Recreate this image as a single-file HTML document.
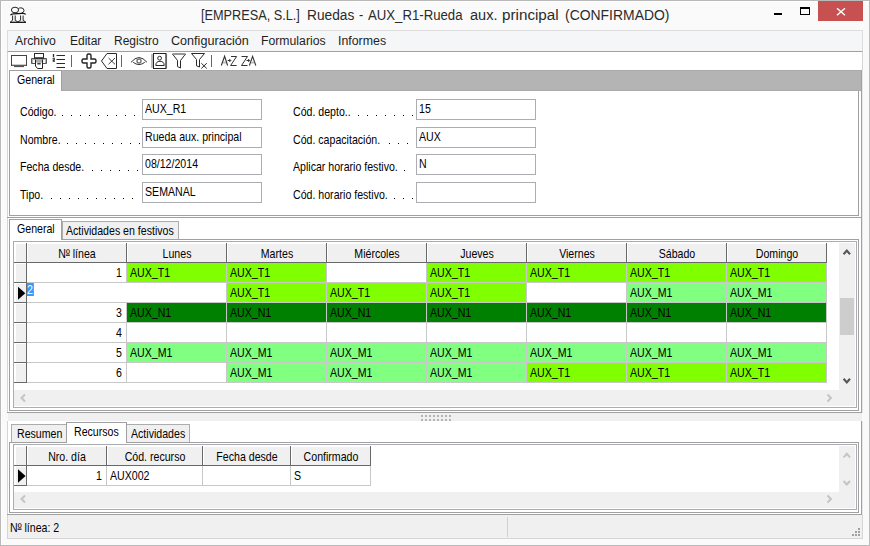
<!DOCTYPE html>
<html><head><meta charset="utf-8">
<style>
*{margin:0;padding:0;box-sizing:border-box}
html,body{width:870px;height:546px;overflow:hidden;background:#fafafa}
body{position:relative;font-family:"Liberation Sans",sans-serif;color:#000}
.a{position:absolute}
.t{position:absolute;white-space:nowrap;font-size:10.6px;line-height:13px;transform:scaleY(1.13);transform-origin:0 10px}
.m{transform:none}
.s{display:inline-block;transform:scaleY(1.13);transform-origin:50% 13px}
.m{font-size:12px;line-height:15px;color:#1e1e1e;transform:none}
.hl{position:absolute;height:1px}
.vl{position:absolute;width:1px}
.c{position:absolute;height:19px;font-size:10.6px;line-height:19px;padding-left:3px;padding-top:1px;white-space:nowrap;overflow:hidden}
.hd{position:absolute;text-align:center;font-size:10.6px;line-height:19px;padding-top:1px;white-space:nowrap;background:#f0f0f0;border-top:1px solid #fff;border-left:1px solid #fff}
svg{position:absolute;overflow:visible}
</style></head><body>

<div class="a" style="left:0px;top:0px;width:870px;height:546px;border:1px solid #b9b9b9"></div>
<div class="hl" style="left:1px;top:1px;width:868px;background:#fff"></div>
<div class="vl" style="left:1px;top:1px;height:544px;background:#fff"></div>
<div class="a" style="left:201.0px;top:6px;font-size:14px;line-height:18px;color:#2b2b2b;white-space:nowrap;transform:scaleX(0.908);transform-origin:0.0px 0">[EMPRESA, S.L.]</div>
<div class="a" style="left:307.0px;top:6px;font-size:14px;line-height:18px;color:#2b2b2b;white-space:nowrap;transform:scaleX(0.979);transform-origin:0.0px 0">Ruedas</div>
<div class="a" style="left:359.0px;top:6px;font-size:14px;line-height:18px;color:#2b2b2b;white-space:nowrap;transform:scaleX(0.900);transform-origin:0.0px 0">-</div>
<div class="a" style="left:368.0px;top:6px;font-size:14px;line-height:18px;color:#2b2b2b;white-space:nowrap;transform:scaleX(0.941);transform-origin:0.0px 0">AUX_R1-Rueda</div>
<div class="a" style="left:470.0px;top:6px;font-size:14px;line-height:18px;color:#2b2b2b;white-space:nowrap;transform:scaleX(1.038);transform-origin:0.0px 0">aux.</div>
<div class="a" style="left:502.0px;top:6px;font-size:14px;line-height:18px;color:#2b2b2b;white-space:nowrap;transform:scaleX(1.087);transform-origin:0.0px 0">principal</div>
<div class="a" style="left:565.0px;top:6px;font-size:14px;line-height:18px;color:#2b2b2b;white-space:nowrap;transform:scaleX(0.995);transform-origin:0.0px 0">(CONFIRMADO)</div>
<div class="a" style="left:818px;top:1px;width:45px;height:20px;background:#c75050"></div>
<svg style="left:0;top:0" width="870" height="30"><path d="M837 8.3 L845 15.2 M845 8.3 L837 15.2" stroke="#fff" stroke-width="1.45"/><rect x="774" y="13" width="8" height="2" fill="#000"/><rect x="800.5" y="7.5" width="9" height="7" fill="none" stroke="#000" stroke-width="1"/><rect x="800" y="7" width="10" height="2" fill="#000"/></svg>
<svg style="left:0;top:0" width="40" height="30"><g fill="none" stroke="#111" stroke-width="0.9"><ellipse cx="15" cy="10" rx="3.6" ry="2.8"/><path d="M18.4 8.6 Q19.5 7.8 21 7.8 Q24 8 24 10.6 Q24 12.6 21.5 13"/><path d="M10.5 15.3 Q11 14 13.5 13.8 L22.5 13.4 Q25.3 13.3 25.6 14.5" stroke-width="1.2"/><path d="M12.6 15.5 V20.3 M15.2 15.5 V20.3 M20.6 15.5 V20.3 M23.1 15.5 V20.3"/><path d="M10.4 22 L12.6 20.2 M15.2 20.2 L17.8 22 L20.6 20.2 M23.1 20.2 L25.5 22"/><path d="M10 22.3 H26" stroke-width="1.3"/></g></svg>
<div class="a" style="left:7px;top:30px;width:856px;height:22px;background:#f5f6f7;border:1px solid #dcdcdc;border-bottom:1px solid #a0a0a0"></div>
<div class="t m" style="left:15px;top:34px;transform:scaleX(1.020);transform-origin:0 0">Archivo</div>
<div class="t m" style="left:70px;top:34px;transform:scaleX(1.000);transform-origin:0 0">Editar</div>
<div class="t m" style="left:114px;top:34px;transform:scaleX(1.000);transform-origin:0 0">Registro</div>
<div class="t m" style="left:171px;top:34px;transform:scaleX(1.050);transform-origin:0 0">Configuración</div>
<div class="t m" style="left:261px;top:34px;transform:scaleX(1.020);transform-origin:0 0">Formularios</div>
<div class="t m" style="left:338px;top:34px;transform:scaleX(1.030);transform-origin:0 0">Informes</div>
<div class="a" style="left:7px;top:52px;width:856px;height:18px;background:#fff;border-left:1px solid #d5d5d5;border-right:1px solid #d5d5d5"></div>
<svg style="left:0;top:0" width="870" height="75"><g fill="none" stroke="#2a2a2a" stroke-width="1">
<rect x="11.5" y="55.5" width="15" height="10" stroke="#444"/><rect x="12" y="64" width="14" height="1.2" fill="#ccc" stroke="none"/><path d="M14 66.5 H24" stroke="#555" stroke-width="1.2"/>
<rect x="34.5" y="53.5" width="9" height="4.5"/><path d="M31.5 58.5 H46.5 V63.5 H31.5 Z" fill="#b4b4b4" stroke="#555"/><rect x="33" y="60" width="12" height="3" fill="#f4f4f4" stroke="none"/><path d="M34 58.2 H44" stroke="#333" stroke-width="1.6"/><path d="M35.5 59.5 V66 L37.5 68.5 H42.5 V59.5" fill="#fff" stroke="#222"/><rect x="36" y="59" width="6" height="3.5" fill="#aaa" stroke="none"/><rect x="37.3" y="62.8" width="3.4" height="1.7" fill="#444" stroke="none"/>
<path d="M53.5 54 V57" stroke-width="1.3"/><path d="M52.5 58.3 H54.3 V60 H53.2 V61.3 H55" stroke-width="1.1"/><path d="M56.5 55.5 H65 M56.5 59.5 H65 M56.5 63.5 H65 M56.5 67.5 H65"/>
<path d="M71.5 55 V67" stroke="#666"/>
<path d="M87 59 V55.5 A1.5 1.5 0 0 1 88.5 54 H89.5 A1.5 1.5 0 0 1 91 55.5 V59 H94.5 A1.5 1.5 0 0 1 96 60.5 V61.5 A1.5 1.5 0 0 1 94.5 63 H91 V66.5 A1.5 1.5 0 0 1 89.5 68 H88.5 A1.5 1.5 0 0 1 87 66.5 V63 H83.5 A1.5 1.5 0 0 1 82 61.5 V60.5 A1.5 1.5 0 0 1 83.5 59 Z" stroke-width="1.4" stroke="#222"/>
<path d="M116.5 53.5 H107 L101.5 61 L107 68.5 H116.5 Z" stroke-linejoin="miter"/><path d="M108.5 58 L115 64.3 M115 58 L108.5 64.3" stroke-width="0.9"/>
<path d="M121.5 55 V67" stroke="#666"/>
<path d="M131 62.3 Q139 52.8 147 62.3 M133.2 62.3 Q139 66.8 144.8 62.3" stroke="#333"/><circle cx="139" cy="61" r="2" stroke="#777" stroke-width="1.4"/>
<path d="M152 54 V68 M166.3 54 V68" stroke="#aaa" stroke-width="1.6"/><rect x="153.5" y="53.5" width="12.5" height="15" stroke="#222"/>
<circle cx="159.6" cy="58.2" r="1.9"/><path d="M155.8 65.5 Q155.8 61.3 160 61.3 Q164.2 61.3 164.2 65.5 Z"/>
<path d="M172.5 54 H185.5 L180.5 60.5 V68 L177.5 66.5 V60.5 Z"/><path d="M173 54.3 H185" stroke="#999" stroke-width="1.2"/>
<path d="M191.5 53.5 H204.5 L199.5 59.5 V67 L196.5 65.8 V59.5 Z"/><path d="M201.3 63.2 L206.8 68.5 M206.8 63.2 L201.3 68.5"/>
<path d="M211.5 55 V67" stroke="#666"/>
</g>
<g fill="none" stroke="#333" stroke-width="1">
<path d="M221.3 65.5 L224.6 56.3 L227.6 65.5" stroke-width="1.1"/><path d="M223 62.5 H226" stroke="#bbb" stroke-width="2"/><path d="M227.7 60.5 H230.5 M229.3 59 L230.8 60.5 L229.3 62"/>
<path d="M231 56.5 H236.6 L230.6 65.5 H236.6"/>
<path d="M241.5 56.5 H247.5 L241.5 65.5 H247.5"/><path d="M246.5 60.5 H249.5 M248.2 59 L249.7 60.5 L248.2 62"/>
<path d="M249.4 65.5 L252.6 56.3 L255.8 65.5" stroke-width="1.1"/><path d="M251 62.5 H254" stroke="#bbb" stroke-width="2"/>
</g></svg>
<div class="a" style="left:7px;top:70px;width:856px;height:148px;background:#fff;border-left:1px solid #d5d5d5;border-right:1px solid #e6e6e6"></div>
<div class="vl" style="left:861px;top:70px;height:148px;background:#a0a0a0"></div>
<div class="hl" style="left:7px;top:217px;width:855px;background:#a0a0a0"></div>
<div class="a" style="left:62px;top:70px;width:799px;height:21px;background:#b4b4b4"></div>
<div class="hl" style="left:62px;top:70px;width:799px;background:#aaaaaa"></div>
<div class="hl" style="left:62px;top:90px;width:799px;background:#aaaaaa"></div>
<div class="vl" style="left:9px;top:70px;height:146px;background:#a0a0a0"></div>
<div class="hl" style="left:9px;top:70px;width:53px;background:#a0a0a0"></div>
<div class="vl" style="left:61px;top:70px;height:21px;background:#a0a0a0"></div>
<div class="vl" style="left:858px;top:91px;height:125px;background:#a0a0a0"></div>
<div class="hl" style="left:9px;top:215px;width:850px;background:#a0a0a0"></div>
<div class="t" style="left:17px;top:74px;">General</div>
<div class="t" style="left:20px;top:106px;">Código.</div>
<div class="a" style="left:142px;top:99px;width:120px;height:21px;border:1px solid #abadb3;background:#fff"></div>
<div class="t" style="left:145px;top:103px;">AUX<span style="position:relative;top:-1px">_</span>R1</div>
<div class="t" style="left:293px;top:106px;">Cód. depto..</div>
<div class="a" style="left:416px;top:99px;width:120px;height:21px;border:1px solid #abadb3;background:#fff"></div>
<div class="t" style="left:419px;top:103px;">15</div>
<div class="t" style="left:20px;top:134px;">Nombre.</div>
<div class="a" style="left:142px;top:127px;width:120px;height:21px;border:1px solid #abadb3;background:#fff"></div>
<div class="t" style="left:145px;top:131px;">Rueda aux. principal</div>
<div class="t" style="left:293px;top:134px;">Cód. capacitación.</div>
<div class="a" style="left:416px;top:127px;width:120px;height:21px;border:1px solid #abadb3;background:#fff"></div>
<div class="t" style="left:419px;top:131px;">AUX</div>
<div class="t" style="left:20px;top:161px;">Fecha desde.</div>
<div class="a" style="left:142px;top:154px;width:120px;height:21px;border:1px solid #abadb3;background:#fff"></div>
<div class="t" style="left:145px;top:158px;">08/12/2014</div>
<div class="t" style="left:293px;top:161px;">Aplicar horario festivo.</div>
<div class="a" style="left:416px;top:154px;width:120px;height:21px;border:1px solid #abadb3;background:#fff"></div>
<div class="t" style="left:419px;top:158px;">N</div>
<div class="t" style="left:20px;top:189px;">Tipo.</div>
<div class="a" style="left:142px;top:182px;width:120px;height:21px;border:1px solid #abadb3;background:#fff"></div>
<div class="t" style="left:145px;top:186px;">SEMANAL</div>
<div class="t" style="left:293px;top:189px;">Cód. horario festivo.</div>
<div class="a" style="left:416px;top:182px;width:120px;height:21px;border:1px solid #abadb3;background:#fff"></div>
<div class="t" style="left:419px;top:186px;"></div>
<svg style="left:0;top:0" width="870" height="220"><g fill="#000">
<rect x="62" y="115" width="1" height="1"/><rect x="71" y="115" width="1" height="1"/><rect x="80" y="115" width="1" height="1"/><rect x="89" y="115" width="1" height="1"/><rect x="98" y="115" width="1" height="1"/><rect x="107" y="115" width="1" height="1"/><rect x="116" y="115" width="1" height="1"/><rect x="125" y="115" width="1" height="1"/><rect x="134" y="115" width="1" height="1"/><rect x="67" y="143" width="1" height="1"/><rect x="76" y="143" width="1" height="1"/><rect x="85" y="143" width="1" height="1"/><rect x="94" y="143" width="1" height="1"/><rect x="103" y="143" width="1" height="1"/><rect x="112" y="143" width="1" height="1"/><rect x="121" y="143" width="1" height="1"/><rect x="130" y="143" width="1" height="1"/><rect x="139" y="143" width="1" height="1"/><rect x="92" y="170" width="1" height="1"/><rect x="101" y="170" width="1" height="1"/><rect x="110" y="170" width="1" height="1"/><rect x="119" y="170" width="1" height="1"/><rect x="128" y="170" width="1" height="1"/><rect x="137" y="170" width="1" height="1"/><rect x="51" y="198" width="1" height="1"/><rect x="60" y="198" width="1" height="1"/><rect x="69" y="198" width="1" height="1"/><rect x="78" y="198" width="1" height="1"/><rect x="87" y="198" width="1" height="1"/><rect x="96" y="198" width="1" height="1"/><rect x="105" y="198" width="1" height="1"/><rect x="114" y="198" width="1" height="1"/><rect x="123" y="198" width="1" height="1"/><rect x="132" y="198" width="1" height="1"/>
<rect x="358" y="115" width="1" height="1"/><rect x="367" y="115" width="1" height="1"/><rect x="376" y="115" width="1" height="1"/><rect x="385" y="115" width="1" height="1"/><rect x="394" y="115" width="1" height="1"/><rect x="403" y="115" width="1" height="1"/><rect x="412" y="115" width="1" height="1"/><rect x="389" y="143" width="1" height="1"/><rect x="398" y="143" width="1" height="1"/><rect x="407" y="143" width="1" height="1"/><rect x="404" y="170" width="1" height="1"/><rect x="394" y="198" width="1" height="1"/><rect x="403" y="198" width="1" height="1"/><rect x="412" y="198" width="1" height="1"/>
</g></svg>
<div class="a" style="left:7px;top:218px;width:856px;height:195px;background:#fff;border-left:1px solid #d5d5d5;border-right:1px solid #e6e6e6"></div>
<div class="vl" style="left:861px;top:218px;height:195px;background:#a0a0a0"></div>
<div class="hl" style="left:7px;top:412px;width:855px;background:#a0a0a0"></div>
<div class="a" style="left:62px;top:221px;width:117px;height:19px;background:#f0f0f0;border:1px solid #acacac;border-bottom:none"></div>
<div class="a" style="left:9px;top:219px;width:53px;height:21px;background:#fff;border:1px solid #a0a0a0;border-bottom:none"></div>
<div class="t" style="left:17px;top:223px;">General</div>
<div class="t" style="left:66px;top:225px;">Actividades en festivos</div>
<div class="hl" style="left:62px;top:239px;width:797px;background:#a0a0a0"></div>
<div class="vl" style="left:9px;top:239px;height:172px;background:#a0a0a0"></div>
<div class="vl" style="left:858px;top:239px;height:172px;background:#a0a0a0"></div>
<div class="hl" style="left:9px;top:410px;width:850px;background:#a0a0a0"></div>
<div class="a" style="left:13px;top:241px;width:844px;height:167px;border:1px solid #abadb3;background:#fff"></div>
<div class="hd" style="left:14px;top:243px;width:12px;height:20px;border-left:2px solid #fff"></div>
<div class="vl" style="left:26px;top:243px;height:20px;background:#696969"></div>
<div class="hd" style="left:27px;top:243px;width:99px;height:20px"><span class="s">N<span style="text-decoration:underline;text-decoration-thickness:1px;text-underline-offset:-3px;text-decoration-skip-ink:none">º</span> línea</span></div>
<div class="vl" style="left:126px;top:243px;height:20px;background:#696969"></div>
<div class="hd" style="left:127px;top:243px;width:99px;height:20px"><span class="s">Lunes</span></div>
<div class="vl" style="left:226px;top:243px;height:20px;background:#696969"></div>
<div class="hd" style="left:227px;top:243px;width:99px;height:20px"><span class="s">Martes</span></div>
<div class="vl" style="left:326px;top:243px;height:20px;background:#696969"></div>
<div class="hd" style="left:327px;top:243px;width:99px;height:20px"><span class="s">Miércoles</span></div>
<div class="vl" style="left:426px;top:243px;height:20px;background:#696969"></div>
<div class="hd" style="left:427px;top:243px;width:99px;height:20px"><span class="s">Jueves</span></div>
<div class="vl" style="left:526px;top:243px;height:20px;background:#696969"></div>
<div class="hd" style="left:527px;top:243px;width:99px;height:20px"><span class="s">Viernes</span></div>
<div class="vl" style="left:626px;top:243px;height:20px;background:#696969"></div>
<div class="hd" style="left:627px;top:243px;width:99px;height:20px"><span class="s">Sábado</span></div>
<div class="vl" style="left:726px;top:243px;height:20px;background:#696969"></div>
<div class="hd" style="left:727px;top:243px;width:99px;height:20px"><span class="s">Domingo</span></div>
<div class="vl" style="left:826px;top:243px;height:20px;background:#696969"></div>
<div class="hl" style="left:14px;top:262px;width:813px;background:#696969"></div>
<div class="a" style="left:14px;top:263px;width:12px;height:19px;background:#f0f0f0;border-top:1px solid #fff;border-left:2px solid #fff"></div>
<div class="hl" style="left:14px;top:282px;width:13px;background:#696969"></div>
<div class="vl" style="left:26px;top:263px;height:20px;background:#696969"></div>
<div class="c" style="left:27px;top:263px;width:99px;background:#ffffff;text-align:right;padding-right:4px;padding-left:0"><span class="s">1</span></div>
<div class="vl" style="left:126px;top:263px;height:20px;background:#c8c8c8"></div>
<div class="c" style="left:127px;top:263px;width:99px;background:#80ff00;"><span class="s">AUX<span style="position:relative;top:-1px">_</span>T1</span></div>
<div class="vl" style="left:226px;top:263px;height:20px;background:#c8c8c8"></div>
<div class="c" style="left:227px;top:263px;width:99px;background:#80ff00;"><span class="s">AUX<span style="position:relative;top:-1px">_</span>T1</span></div>
<div class="vl" style="left:326px;top:263px;height:20px;background:#c8c8c8"></div>
<div class="c" style="left:327px;top:263px;width:99px;background:#ffffff;"><span class="s"></span></div>
<div class="vl" style="left:426px;top:263px;height:20px;background:#c8c8c8"></div>
<div class="c" style="left:427px;top:263px;width:99px;background:#80ff00;"><span class="s">AUX<span style="position:relative;top:-1px">_</span>T1</span></div>
<div class="vl" style="left:526px;top:263px;height:20px;background:#c8c8c8"></div>
<div class="c" style="left:527px;top:263px;width:99px;background:#80ff00;"><span class="s">AUX<span style="position:relative;top:-1px">_</span>T1</span></div>
<div class="vl" style="left:626px;top:263px;height:20px;background:#c8c8c8"></div>
<div class="c" style="left:627px;top:263px;width:99px;background:#80ff00;"><span class="s">AUX<span style="position:relative;top:-1px">_</span>T1</span></div>
<div class="vl" style="left:726px;top:263px;height:20px;background:#c8c8c8"></div>
<div class="c" style="left:727px;top:263px;width:99px;background:#80ff00;"><span class="s">AUX<span style="position:relative;top:-1px">_</span>T1</span></div>
<div class="vl" style="left:826px;top:263px;height:20px;background:#c8c8c8"></div>
<div class="hl" style="left:27px;top:282px;width:800px;background:#c8c8c8"></div>
<div class="a" style="left:14px;top:283px;width:12px;height:19px;background:#f0f0f0;border-top:1px solid #fff;border-left:2px solid #fff"></div>
<div class="hl" style="left:14px;top:302px;width:13px;background:#696969"></div>
<div class="vl" style="left:26px;top:283px;height:20px;background:#696969"></div>
<div class="c" style="left:27px;top:283px;width:99px;background:#ffffff;text-align:right;padding-right:4px;padding-left:0"><span class="s"></span></div>
<div class="c" style="left:127px;top:283px;width:99px;background:#ffffff;"><span class="s"></span></div>
<div class="vl" style="left:226px;top:283px;height:20px;background:#c8c8c8"></div>
<div class="c" style="left:227px;top:283px;width:99px;background:#80ff00;"><span class="s">AUX<span style="position:relative;top:-1px">_</span>T1</span></div>
<div class="vl" style="left:326px;top:283px;height:20px;background:#c8c8c8"></div>
<div class="c" style="left:327px;top:283px;width:99px;background:#80ff00;"><span class="s">AUX<span style="position:relative;top:-1px">_</span>T1</span></div>
<div class="vl" style="left:426px;top:283px;height:20px;background:#c8c8c8"></div>
<div class="c" style="left:427px;top:283px;width:99px;background:#80ff00;"><span class="s">AUX<span style="position:relative;top:-1px">_</span>T1</span></div>
<div class="vl" style="left:526px;top:283px;height:20px;background:#c8c8c8"></div>
<div class="c" style="left:527px;top:283px;width:99px;background:#ffffff;"><span class="s"></span></div>
<div class="vl" style="left:626px;top:283px;height:20px;background:#c8c8c8"></div>
<div class="c" style="left:627px;top:283px;width:99px;background:#80ff80;"><span class="s">AUX<span style="position:relative;top:-1px">_</span>M1</span></div>
<div class="vl" style="left:726px;top:283px;height:20px;background:#c8c8c8"></div>
<div class="c" style="left:727px;top:283px;width:99px;background:#80ff80;"><span class="s">AUX<span style="position:relative;top:-1px">_</span>M1</span></div>
<div class="vl" style="left:826px;top:283px;height:20px;background:#c8c8c8"></div>
<div class="hl" style="left:27px;top:302px;width:800px;background:#c8c8c8"></div>
<div class="a" style="left:14px;top:303px;width:12px;height:19px;background:#f0f0f0;border-top:1px solid #fff;border-left:2px solid #fff"></div>
<div class="hl" style="left:14px;top:322px;width:13px;background:#696969"></div>
<div class="vl" style="left:26px;top:303px;height:20px;background:#696969"></div>
<div class="c" style="left:27px;top:303px;width:99px;background:#ffffff;text-align:right;padding-right:4px;padding-left:0"><span class="s">3</span></div>
<div class="vl" style="left:126px;top:303px;height:20px;background:#c8c8c8"></div>
<div class="c" style="left:127px;top:303px;width:99px;background:#008000;"><span class="s">AUX<span style="position:relative;top:-1px">_</span>N1</span></div>
<div class="vl" style="left:226px;top:303px;height:20px;background:#c8c8c8"></div>
<div class="c" style="left:227px;top:303px;width:99px;background:#008000;"><span class="s">AUX<span style="position:relative;top:-1px">_</span>N1</span></div>
<div class="vl" style="left:326px;top:303px;height:20px;background:#c8c8c8"></div>
<div class="c" style="left:327px;top:303px;width:99px;background:#008000;"><span class="s">AUX<span style="position:relative;top:-1px">_</span>N1</span></div>
<div class="vl" style="left:426px;top:303px;height:20px;background:#c8c8c8"></div>
<div class="c" style="left:427px;top:303px;width:99px;background:#008000;"><span class="s">AUX<span style="position:relative;top:-1px">_</span>N1</span></div>
<div class="vl" style="left:526px;top:303px;height:20px;background:#c8c8c8"></div>
<div class="c" style="left:527px;top:303px;width:99px;background:#008000;"><span class="s">AUX<span style="position:relative;top:-1px">_</span>N1</span></div>
<div class="vl" style="left:626px;top:303px;height:20px;background:#c8c8c8"></div>
<div class="c" style="left:627px;top:303px;width:99px;background:#008000;"><span class="s">AUX<span style="position:relative;top:-1px">_</span>N1</span></div>
<div class="vl" style="left:726px;top:303px;height:20px;background:#c8c8c8"></div>
<div class="c" style="left:727px;top:303px;width:99px;background:#008000;"><span class="s">AUX<span style="position:relative;top:-1px">_</span>N1</span></div>
<div class="vl" style="left:826px;top:303px;height:20px;background:#c8c8c8"></div>
<div class="hl" style="left:27px;top:322px;width:800px;background:#c8c8c8"></div>
<div class="a" style="left:14px;top:323px;width:12px;height:19px;background:#f0f0f0;border-top:1px solid #fff;border-left:2px solid #fff"></div>
<div class="hl" style="left:14px;top:342px;width:13px;background:#696969"></div>
<div class="vl" style="left:26px;top:323px;height:20px;background:#696969"></div>
<div class="c" style="left:27px;top:323px;width:99px;background:#ffffff;text-align:right;padding-right:4px;padding-left:0"><span class="s">4</span></div>
<div class="vl" style="left:126px;top:323px;height:20px;background:#c8c8c8"></div>
<div class="c" style="left:127px;top:323px;width:99px;background:#ffffff;"><span class="s"></span></div>
<div class="vl" style="left:226px;top:323px;height:20px;background:#c8c8c8"></div>
<div class="c" style="left:227px;top:323px;width:99px;background:#ffffff;"><span class="s"></span></div>
<div class="vl" style="left:326px;top:323px;height:20px;background:#c8c8c8"></div>
<div class="c" style="left:327px;top:323px;width:99px;background:#ffffff;"><span class="s"></span></div>
<div class="vl" style="left:426px;top:323px;height:20px;background:#c8c8c8"></div>
<div class="c" style="left:427px;top:323px;width:99px;background:#ffffff;"><span class="s"></span></div>
<div class="vl" style="left:526px;top:323px;height:20px;background:#c8c8c8"></div>
<div class="c" style="left:527px;top:323px;width:99px;background:#ffffff;"><span class="s"></span></div>
<div class="vl" style="left:626px;top:323px;height:20px;background:#c8c8c8"></div>
<div class="c" style="left:627px;top:323px;width:99px;background:#ffffff;"><span class="s"></span></div>
<div class="vl" style="left:726px;top:323px;height:20px;background:#c8c8c8"></div>
<div class="c" style="left:727px;top:323px;width:99px;background:#ffffff;"><span class="s"></span></div>
<div class="vl" style="left:826px;top:323px;height:20px;background:#c8c8c8"></div>
<div class="hl" style="left:27px;top:342px;width:800px;background:#c8c8c8"></div>
<div class="a" style="left:14px;top:343px;width:12px;height:19px;background:#f0f0f0;border-top:1px solid #fff;border-left:2px solid #fff"></div>
<div class="hl" style="left:14px;top:362px;width:13px;background:#696969"></div>
<div class="vl" style="left:26px;top:343px;height:20px;background:#696969"></div>
<div class="c" style="left:27px;top:343px;width:99px;background:#ffffff;text-align:right;padding-right:4px;padding-left:0"><span class="s">5</span></div>
<div class="vl" style="left:126px;top:343px;height:20px;background:#c8c8c8"></div>
<div class="c" style="left:127px;top:343px;width:99px;background:#80ff80;"><span class="s">AUX<span style="position:relative;top:-1px">_</span>M1</span></div>
<div class="vl" style="left:226px;top:343px;height:20px;background:#c8c8c8"></div>
<div class="c" style="left:227px;top:343px;width:99px;background:#80ff80;"><span class="s">AUX<span style="position:relative;top:-1px">_</span>M1</span></div>
<div class="vl" style="left:326px;top:343px;height:20px;background:#c8c8c8"></div>
<div class="c" style="left:327px;top:343px;width:99px;background:#80ff80;"><span class="s">AUX<span style="position:relative;top:-1px">_</span>M1</span></div>
<div class="vl" style="left:426px;top:343px;height:20px;background:#c8c8c8"></div>
<div class="c" style="left:427px;top:343px;width:99px;background:#80ff80;"><span class="s">AUX<span style="position:relative;top:-1px">_</span>M1</span></div>
<div class="vl" style="left:526px;top:343px;height:20px;background:#c8c8c8"></div>
<div class="c" style="left:527px;top:343px;width:99px;background:#80ff80;"><span class="s">AUX<span style="position:relative;top:-1px">_</span>M1</span></div>
<div class="vl" style="left:626px;top:343px;height:20px;background:#c8c8c8"></div>
<div class="c" style="left:627px;top:343px;width:99px;background:#80ff80;"><span class="s">AUX<span style="position:relative;top:-1px">_</span>M1</span></div>
<div class="vl" style="left:726px;top:343px;height:20px;background:#c8c8c8"></div>
<div class="c" style="left:727px;top:343px;width:99px;background:#80ff80;"><span class="s">AUX<span style="position:relative;top:-1px">_</span>M1</span></div>
<div class="vl" style="left:826px;top:343px;height:20px;background:#c8c8c8"></div>
<div class="hl" style="left:27px;top:362px;width:800px;background:#c8c8c8"></div>
<div class="a" style="left:14px;top:363px;width:12px;height:19px;background:#f0f0f0;border-top:1px solid #fff;border-left:2px solid #fff"></div>
<div class="hl" style="left:14px;top:382px;width:13px;background:#696969"></div>
<div class="vl" style="left:26px;top:363px;height:20px;background:#696969"></div>
<div class="c" style="left:27px;top:363px;width:99px;background:#ffffff;text-align:right;padding-right:4px;padding-left:0"><span class="s">6</span></div>
<div class="vl" style="left:126px;top:363px;height:20px;background:#c8c8c8"></div>
<div class="c" style="left:127px;top:363px;width:99px;background:#ffffff;"><span class="s"></span></div>
<div class="vl" style="left:226px;top:363px;height:20px;background:#c8c8c8"></div>
<div class="c" style="left:227px;top:363px;width:99px;background:#80ff80;"><span class="s">AUX<span style="position:relative;top:-1px">_</span>M1</span></div>
<div class="vl" style="left:326px;top:363px;height:20px;background:#c8c8c8"></div>
<div class="c" style="left:327px;top:363px;width:99px;background:#80ff80;"><span class="s">AUX<span style="position:relative;top:-1px">_</span>M1</span></div>
<div class="vl" style="left:426px;top:363px;height:20px;background:#c8c8c8"></div>
<div class="c" style="left:427px;top:363px;width:99px;background:#80ff80;"><span class="s">AUX<span style="position:relative;top:-1px">_</span>M1</span></div>
<div class="vl" style="left:526px;top:363px;height:20px;background:#c8c8c8"></div>
<div class="c" style="left:527px;top:363px;width:99px;background:#80ff00;"><span class="s">AUX<span style="position:relative;top:-1px">_</span>T1</span></div>
<div class="vl" style="left:626px;top:363px;height:20px;background:#c8c8c8"></div>
<div class="c" style="left:627px;top:363px;width:99px;background:#80ff00;"><span class="s">AUX<span style="position:relative;top:-1px">_</span>T1</span></div>
<div class="vl" style="left:726px;top:363px;height:20px;background:#c8c8c8"></div>
<div class="c" style="left:727px;top:363px;width:99px;background:#80ff00;"><span class="s">AUX<span style="position:relative;top:-1px">_</span>T1</span></div>
<div class="vl" style="left:826px;top:363px;height:20px;background:#c8c8c8"></div>
<div class="hl" style="left:27px;top:382px;width:800px;background:#c8c8c8"></div>
<div class="a" style="left:27px;top:283px;width:6px;height:13px;background:#3399ff"></div>
<div class="t" style="left:27px;top:284px;color:#fff">2</div>
<div class="vl" style="left:33px;top:283px;height:13px;background:#ff8000"></div>
<svg style="left:0;top:0" width="870" height="546"><path d="M18 286.8 L25.3 293.3 L18 299.8 Z" fill="#000"/></svg>
<div class="a" style="left:839px;top:243px;width:16px;height:147px;background:#f0f0f0"></div>
<div class="a" style="left:840px;top:298px;width:14px;height:37px;background:#cdcdcd"></div>
<div class="a" style="left:14px;top:390px;width:841px;height:16px;background:#f0f0f0"></div>
<svg style="left:0;top:0" width="870" height="546"><g fill="none" stroke="#555" stroke-width="2.1"><path d="M843.6 254.3 L846.8 250.6 L850 254.3"/><path d="M843.6 378.7 L846.8 382.4 L850 378.7"/></g><g fill="none" stroke="#c4c4c4" stroke-width="2"><path d="M827.5 394.5 L831 398 L827.5 401.5"/><path d="M25 394.5 L21.5 398 L25 401.5"/></g></svg>
<div class="a" style="left:8px;top:413px;width:854px;height:8px;background:#f0f0f0"></div>
<svg style="left:0;top:0" width="870" height="546"><g fill="#b4b4b4"><rect x="421" y="415" width="2" height="2"/><rect x="421" y="419" width="2" height="2"/><rect x="425" y="415" width="2" height="2"/><rect x="425" y="419" width="2" height="2"/><rect x="429" y="415" width="2" height="2"/><rect x="429" y="419" width="2" height="2"/><rect x="433" y="415" width="2" height="2"/><rect x="433" y="419" width="2" height="2"/><rect x="437" y="415" width="2" height="2"/><rect x="437" y="419" width="2" height="2"/><rect x="441" y="415" width="2" height="2"/><rect x="441" y="419" width="2" height="2"/><rect x="445" y="415" width="2" height="2"/><rect x="445" y="419" width="2" height="2"/><rect x="449" y="415" width="2" height="2"/><rect x="449" y="419" width="2" height="2"/></g></svg>
<div class="a" style="left:7px;top:421px;width:856px;height:94px;background:#fff;border-left:1px solid #d5d5d5;border-right:1px solid #e6e6e6"></div>
<div class="vl" style="left:861px;top:421px;height:94px;background:#a0a0a0"></div>
<div class="hl" style="left:7px;top:514px;width:855px;background:#a0a0a0"></div>
<div class="a" style="left:11px;top:424px;width:56px;height:19px;background:#f0f0f0;border:1px solid #acacac;border-bottom:none"></div>
<div class="a" style="left:126px;top:424px;width:64px;height:19px;background:#f0f0f0;border:1px solid #acacac;border-bottom:none"></div>
<div class="a" style="left:66px;top:422px;width:61px;height:21px;background:#fff;border:1px solid #a0a0a0;border-bottom:none"></div>
<div class="t" style="left:17px;top:428px;">Resumen</div>
<div class="t" style="left:74px;top:426px;">Recursos</div>
<div class="t" style="left:131px;top:428px;">Actividades</div>
<div class="hl" style="left:9px;top:442px;width:57px;background:#a0a0a0"></div>
<div class="hl" style="left:127px;top:442px;width:732px;background:#a0a0a0"></div>
<div class="vl" style="left:9px;top:442px;height:71px;background:#a0a0a0"></div>
<div class="vl" style="left:858px;top:442px;height:71px;background:#a0a0a0"></div>
<div class="hl" style="left:9px;top:512px;width:850px;background:#a0a0a0"></div>
<div class="a" style="left:13px;top:444px;width:844px;height:66px;border:1px solid #abadb3;background:#fff"></div>
<div class="hd" style="left:14px;top:446px;width:12px;height:20px;border-left:2px solid #fff"></div>
<div class="vl" style="left:26px;top:446px;height:20px;background:#696969"></div>
<div class="hd" style="left:27px;top:446px;width:79px;height:20px"><span class="s">Nro. día</span></div>
<div class="vl" style="left:106px;top:446px;height:20px;background:#696969"></div>
<div class="hd" style="left:107px;top:446px;width:95px;height:20px"><span class="s">Cód. recurso</span></div>
<div class="vl" style="left:202px;top:446px;height:20px;background:#696969"></div>
<div class="hd" style="left:203px;top:446px;width:87px;height:20px"><span class="s">Fecha desde</span></div>
<div class="vl" style="left:290px;top:446px;height:20px;background:#696969"></div>
<div class="hd" style="left:291px;top:446px;width:79px;height:20px"><span class="s">Confirmado</span></div>
<div class="vl" style="left:370px;top:446px;height:20px;background:#696969"></div>
<div class="hl" style="left:14px;top:465px;width:357px;background:#696969"></div>
<div class="a" style="left:14px;top:466px;width:12px;height:19px;background:#f0f0f0;border-top:1px solid #fff;border-left:2px solid #fff"></div>
<div class="hl" style="left:14px;top:485px;width:13px;background:#696969"></div>
<div class="vl" style="left:26px;top:466px;height:20px;background:#696969"></div>
<div class="c" style="left:27px;top:466px;width:79px;background:#ffffff;text-align:right;padding-right:4px;padding-left:0"><span class="s">1</span></div>
<div class="vl" style="left:106px;top:466px;height:20px;background:#c8c8c8"></div>
<div class="c" style="left:107px;top:466px;width:95px;background:#ffffff;"><span class="s">AUX002</span></div>
<div class="vl" style="left:202px;top:466px;height:20px;background:#c8c8c8"></div>
<div class="c" style="left:203px;top:466px;width:87px;background:#ffffff;"><span class="s"></span></div>
<div class="vl" style="left:290px;top:466px;height:20px;background:#c8c8c8"></div>
<div class="c" style="left:291px;top:466px;width:79px;background:#ffffff;"><span class="s">S</span></div>
<div class="vl" style="left:370px;top:466px;height:20px;background:#c8c8c8"></div>
<div class="hl" style="left:27px;top:485px;width:344px;background:#c8c8c8"></div>
<svg style="left:0;top:0" width="870" height="546"><path d="M18 469.3 L25.6 476 L18 482.7 Z" fill="#000"/></svg>
<div class="a" style="left:839px;top:446px;width:16px;height:46px;background:#f0f0f0"></div>
<div class="a" style="left:14px;top:492px;width:841px;height:16px;background:#f0f0f0"></div>
<svg style="left:0;top:0" width="870" height="546"><g fill="none" stroke="#c4c4c4" stroke-width="2"><path d="M843.6 457.3 L846.8 453.8 L850 457.3"/><path d="M843.6 481 L846.8 484.5 L850 481"/><path d="M827.5 495.5 L831 499 L827.5 502.5"/><path d="M25 495.5 L21.5 499 L25 502.5"/></g></svg>
<div class="a" style="left:8px;top:515px;width:855px;height:24px;background:#f0f0f0;border-right:1px solid #d5d5d5;border-bottom:1px solid #d5d5d5"></div>
<div class="vl" style="left:7px;top:515px;height:24px;background:#d5d5d5"></div>
<div class="t" style="left:10px;top:522px;">N<span style="text-decoration:underline;text-decoration-thickness:1px;text-underline-offset:-3px;text-decoration-skip-ink:none">º</span> línea: 2</div>
<div class="vl" style="left:507px;top:517px;height:20px;background:#d0d0d0"></div>
<svg style="left:0;top:0" width="870" height="546"><g fill="#a0a0a0"><rect x="858" y="528" width="2" height="2"/><rect x="855" y="531" width="2" height="2"/><rect x="858" y="531" width="2" height="2"/><rect x="852" y="534" width="2" height="2"/><rect x="855" y="534" width="2" height="2"/><rect x="858" y="534" width="2" height="2"/></g></svg>
</body></html>
